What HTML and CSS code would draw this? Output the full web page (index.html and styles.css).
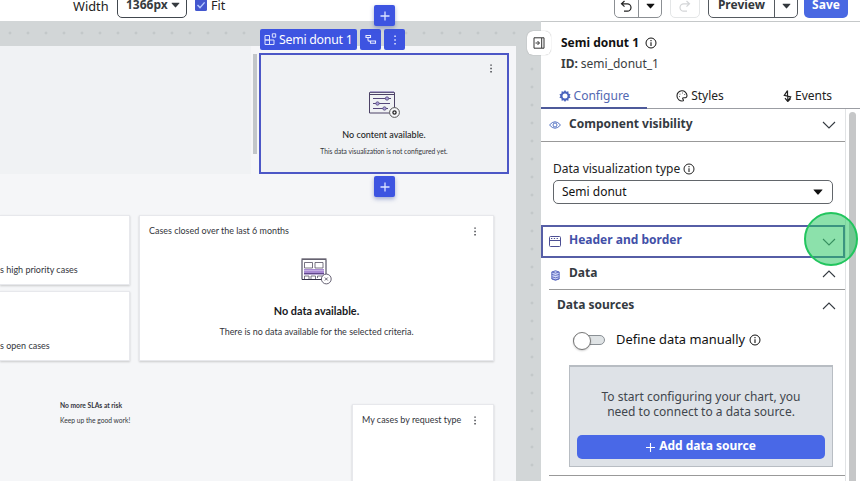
FILE: index.html
```html
<!DOCTYPE html>
<html lang="en">
<head>
<meta charset="utf-8">
<title>Semi donut 1</title>
<link rel="stylesheet" href="styles.css">
</head>
<body>
<svg width="0" height="0" class="defs">
  <symbol id="info" viewBox="0 0 12 12"><circle cx="6" cy="6" r="5" fill="none" stroke="currentColor"/><path d="M6 5.3V9M6 3v1.2" stroke="currentColor" stroke-width="1.1"/></symbol>
  <symbol id="down" viewBox="0 0 14 8"><path d="M1 1l6 6 6-6" fill="none" stroke="currentColor" stroke-width="1.1"/></symbol>
  <symbol id="up" viewBox="0 0 14 8"><path d="M1 7l6-6 6 6" fill="none" stroke="currentColor" stroke-width="1.1"/></symbol>
  <symbol id="caret" viewBox="0 0 10 6"><path d="M.8.5h8.4q.6 0 .2.5L5.4 5.5q-.4.3-.8 0L.6 1Q.2.5.8.5z" fill="currentColor"/></symbol>
  <symbol id="dots" viewBox="0 0 4 10"><path d="M1.3.5h1.5V2H1.3zM1.3 4.2h1.5v1.5H1.3zM1.3 7.9h1.5v1.5H1.3z" fill="currentColor"/></symbol>
</svg>

<header class="topbar">
  <span class="width-label">Width</span>
  <div class="width-box"><b>1366px</b><svg width="9" height="6"><use href="#caret"/></svg></div>
  <svg class="check" width="12" height="12" viewBox="0 0 12 12"><rect width="12" height="12" rx="1.5" fill="#4357cf"/><path d="M2.5 6l2.5 2.6L9.6 3.4" fill="none" stroke="#b4c8ff" stroke-width="1.4"/></svg>
  <span class="fit-label">Fit</span>
  <div class="split undo">
    <span><svg width="12" height="13" viewBox="0 0 12 13"><path d="M4.5 1L1.5 3.8l3 2.8M1.7 3.8h5.6a3.7 3.7 0 0 1 0 7.4H4" fill="none" stroke="#222" stroke-width="1.2"/></svg></span>
    <span><svg width="9" height="6"><use href="#caret"/></svg></span>
  </div>
  <div class="redo"><svg width="12" height="13" viewBox="0 0 12 13"><path d="M7.5 1l3 2.8-3 2.8M10.3 3.8H4.7a3.7 3.7 0 0 0 0 7.4H8" fill="none" stroke="#d3d5d7" stroke-width="1.2"/></svg></div>
  <div class="split preview">
    <b>Preview</b>
    <span><svg width="9" height="6"><use href="#caret"/></svg></span>
  </div>
  <b class="save">Save</b>
</header>

<main class="workspace">
  <section class="canvas">
    <div class="page">
      <div class="hero">
        <div class="hero-side"></div>
        <div class="hero-scroll"></div>
        <article class="selected">
          <div class="selection-bar">
            <span class="chip name"><svg width="13" height="13" viewBox="0 0 13 13"><path d="M1 2.5h4.5V7H1zM1 7h4.5v4.5H1zM5.5 7H10v4.5H5.5zM8.3.8h3.4v3.4H8.3z" fill="none" stroke="#dfe5ff"/></svg><span>Semi donut 1</span></span>
            <span class="chip"><svg width="12" height="11" viewBox="0 0 12 11"><path d="M1 1.5h4.5v2H1zM5.5 7h5v2.3h-5zM3 3.7v2.2q0 1.2 1.2 1.2h1" fill="none" stroke="#e6eaff" stroke-width="1.1"/></svg></span>
            <span class="chip"><svg width="4" height="10"><use href="#dots"/></svg></span>
          </div>
          <span class="add add-top"><svg width="10" height="10"><path d="M5 .5v9M.5 5h9" stroke="#dce3ff" stroke-width="1.3"/></svg></span>
          <span class="add add-bottom"><svg width="10" height="10"><path d="M5 .5v9M.5 5h9" stroke="#dce3ff" stroke-width="1.3"/></svg></span>
          <svg class="kebab" width="4" height="9"><use href="#dots"/></svg>
          <svg class="art" width="31" height="27" viewBox="0 0 31 27">
            <path d="M.5 1.5h25v20.500H.5zM.5 3.500h25" fill="none" stroke="#4c4266"/><path d="M1 .8h24" stroke="#9185bd"/>
            <path d="M4 7.500h18M4 12.500h17M4 17.500h15" stroke="#55477a"/>
            <g fill="#a9a0d8" stroke="#55477a" stroke-width=".8"><circle cx="18" cy="7.500" r="1.700"/><circle cx="8.500" cy="12.500" r="1.700"/><circle cx="15.500" cy="17.500" r="1.700"/></g>
            <circle cx="25.500" cy="21.500" r="4.900" fill="#f7f8fa" stroke="#555"/><circle cx="25.500" cy="21.500" r="1.600" fill="none" stroke="#222" stroke-width="1.300"/>
          </svg>
          <p class="sel-title">No content available.</p>
          <p class="sel-note">This data visualization is not configured yet.</p>
        </article>
      </div>

      <div class="cards">
        <div class="stack">
          <article class="card metric">s high priority cases</article>
          <article class="card metric">s open cases</article>
        </div>
        <article class="card closed">
          <div class="card-head"><span>Cases closed over the last 6 months</span><svg width="4" height="9"><use href="#dots"/></svg></div>
          <svg class="art" width="31" height="27" viewBox="0 0 31 27">
            <path d="M1 1.500h24v20H1z" fill="#fff" stroke="#333046"/><path d="M.5 1h25" stroke="#77737f" stroke-width="1.500"/>
            <path d="M3.500 4.500h8v5.500h-8zM14 4.500h8v5.500h-8zM3.500 21v-3h4.500v3M10 21v-3h4.500v3M16.500 20v-2H22" fill="none" stroke="#555063" stroke-width=".8"/>
            <path d="M3 11h20v5.500H3z" fill="#a98bd3"/><path d="M3 12.500h20" stroke="#c6b0e3"/><path d="M3 15.700h20" stroke="#51397a"/>
            <circle cx="25.300" cy="21" r="4.900" fill="#fff" stroke="#555063" stroke-width=".9"/><path d="M23.800 19.500l3 3m0-3l-3 3" stroke="#4a4558" stroke-width=".8"/>
          </svg>
          <p class="nodata">No data available.</p>
          <p class="nodata-note">There is no data available for the selected criteria.</p>
        </article>
      </div>

      <div class="lower">
        <div class="sla"><p class="sla-title">No more SLAs at risk</p><p class="sla-note">Keep up the good work!</p></div>
        <article class="card requests"><div class="card-head"><span>My cases by request type</span><svg width="4" height="9"><use href="#dots"/></svg></div></article>
      </div>
    </div>
  </section>

  <aside class="panel">
    <span class="collapse"><svg width="12" height="12" viewBox="0 0 12 12"><path d="M1 .8h10v10.400H1zM8.700 1v10" fill="none" stroke="#333"/><path d="M2.500 6h3.700M4.500 4l2 2-2 2" fill="none" stroke="#333"/></svg></span>
    <div class="title-row"><b>Semi donut 1</b><svg width="12" height="12"><use href="#info"/></svg></div>
    <div class="id-row"><b>ID:</b><span>semi_donut_1</span></div>
    <nav class="tabs">
      <span class="tab active"><svg width="12" height="12" viewBox="0 0 12 12"><path d="M6 0l1.200 1.800 2.200-.5.100 2.200L11.600 4.600 10.500 6l1.100 1.500-2.100 1-.1 2.200-2.200-.4L6 12l-1.200-1.700-2.200.4-.1-2.200-2.100-1L1.500 6 .4 4.600l2.100-1.100.1-2.200 2.200.5z" fill="#4a63bd"/><circle cx="6" cy="6" r="2.500" fill="#fff"/></svg><span>Configure</span></span>
      <span class="tab"><svg width="12" height="12" viewBox="0 0 12 12"><path d="M7.200 10.800C4 11.500 1 9.200 1 6a5 5 0 0 1 10-.5c0 2.300-1.500 2.300-3 2.200-1.400-.1-1.700.7-1 1.600.4.700.6 1.300.2 1.500z" fill="none" stroke="#222" stroke-width="1.100"/><path d="M3.500 4.200h1M6 3h1M8.200 4.500h1M3 6.600h1" stroke="#222" stroke-width=".7"/></svg><span>Styles</span></span>
      <span class="tab events"><svg width="9" height="12" viewBox="0 0 9 12"><path d="M4.500.5L1.300 5.300l6.400 1.500L4.800 11.500M4.500.5v5.300M4.800 11.500V6M2 8.200l2.800 3.300 2.800-3" fill="none" stroke="#222" stroke-width="1.200"/></svg><span>Events</span></span>
    </nav>
    <div class="scroller">
      <div class="settings">
        <div class="section visibility"><svg class="lead" width="12" height="10" viewBox="0 0 12 10"><path d="M.5 5Q6-1.500 11.500 5 6 11.500.500 5z" fill="none" stroke="#5775c4"/><circle cx="6" cy="5" r="2" fill="none" stroke="#5775c4"/></svg><b>Component visibility</b><svg class="chev" width="14" height="8"><use href="#down"/></svg></div>
        <div class="field">
          <label><span>Data visualization type</span><svg width="12" height="12"><use href="#info"/></svg></label>
          <div class="select"><span>Semi donut</span><svg width="10" height="6"><use href="#caret"/></svg></div>
        </div>
        <div class="section border-section"><svg class="lead" width="12" height="11" viewBox="0 0 12 11"><path d="M1.500.5h9q1 0 1 1v8q0 1-1 1h-9q-1 0-1-1v-8q0-1 1-1zM.5 4.500h11" fill="none" stroke="#4c4f94"/><path d="M2 2.500h8" stroke="#4c4f94" stroke-dasharray="1.300 1.500"/></svg><b>Header and border</b><svg class="chev" width="14" height="8"><use href="#down"/></svg><i class="pointer"></i></div>
        <div class="section data"><svg class="lead" width="9" height="11" viewBox="0 0 9 11"><path d="M.8 2Q4.500-.5 8.200 2v7Q4.500 11.500.8 9zM.8 2q3.700 2 7.400 0M.8 4.400q3.700 2 7.400 0M.8 6.800q3.700 2 7.400 0M.8 8.700q3.700 2 7.400 0" fill="#c8d0fa" stroke="#5563bb" stroke-width=".9"/></svg><b>Data</b><svg class="chev" width="14" height="8"><use href="#up"/></svg></div>
        <div class="section sources"><b>Data sources</b><svg class="chev" width="14" height="8"><use href="#up"/></svg></div>
        <div class="toggle-row"><span class="toggle"></span><span class="manual">Define data manually</span><svg width="12" height="12"><use href="#info"/></svg></div>
        <div class="connect">
          <p>To start configuring your chart, you<br>need to connect to a data source.</p>
          <div class="add-source"><svg width="9" height="9"><path d="M4.500 0v9M0 4.500h9" stroke="#fff" stroke-width="1.100"/></svg><b>Add data source</b></div>
        </div>
      </div>
      <div class="track"><div class="thumb"></div></div>
    </div>
  </aside>
</main>
</body>
</html>
```
FILE: styles.css
```css
* { box-sizing: border-box; }
body { margin: 0; width: 860px; height: 481px; overflow: hidden; background: #fff; color: #222; font: 12px/16px "Noto Sans", "Open Sans", sans-serif; white-space: nowrap; }
p { margin: 0; }
svg { flex: none; display: block; }
.defs { position: absolute; }

.topbar { display: flex; height: 21px; align-items: flex-start; line-height: 16px; }
.topbar > * { flex: none; }
.width-label { margin: -2px 0 0 73px; width: 36px; font-size: 12.8px; }
.width-box { display: flex; align-items: center; justify-content: space-between; width: 70px; height: 28px; margin: -10px 0 0 8px; padding: 2px 6px 0 8px; border: 1px solid #41474e; border-radius: 5px; color: #363b40; }
.check { margin: -1px 0 0 8px; }
.fit-label { margin: -2px 0 0 4px; width: 13px; font-size: 12.5px; }
.split { display: flex; height: 28px; margin-top: -10px; border: 1px solid #8b8f93; border-radius: 5px; }
.split > * { display: flex; align-items: center; justify-content: center; padding-top: 4px; }
.undo { width: 48px; margin-left: 390px; color: #111; }
.undo > :first-child { width: 23px; padding-right: 2px; }
.undo > :last-child { flex: 1; border-left: 1px solid #8b8f93; }
.redo { display: flex; align-items: center; justify-content: center; width: 30px; height: 28px; margin: -10px 0 0 8px; padding-top: 4px; border: 1px solid #e4e6e7; border-radius: 5px; }
.preview { width: 90px; margin-left: 8px; border-color: #555a60; color: #33383d; }
.preview b { width: 65px; padding-top: 2px; }
.preview span { flex: 1; border-left: 1px solid #555a60; }
.save { width: 44px; height: 28px; margin: -10px 0 0 6px; padding-top: 7px; border-radius: 5px; background: #4968e2; color: #fff; text-align: center; }

.workspace { display: flex; height: 460px; }
.canvas { width: 541px; padding-top: 25px; background: radial-gradient(circle at 10px 12px, #c3c8c9 1px, transparent 1.8px) 0 0 / 18px 18px #d2d6d7; }
.page { width: 516px; height: 435px; background: #f5f6f8; font-family: Lato, sans-serif; color: #33353b; }
.hero { display: flex; height: 128px; }
.hero-side { width: 251px; background: #f0f2f4; }
.hero-scroll { width: 4px; height: 100px; margin: 8px 2px 0; background: #c2c6c9; }
.selected { position: relative; display: flex; flex-direction: column; align-items: center; width: 250px; height: 121px; margin-top: 7px; border: 2px solid #4c57c6; background: #f0f2f4; }
.selection-bar { position: absolute; left: -1px; top: -26px; display: flex; gap: 3px; font-family: "Noto Sans", sans-serif; }
.chip { display: flex; align-items: center; justify-content: center; width: 21px; height: 21px; border-radius: 2px; background: #3d54e1; color: #e6eaff; }
.chip.name { width: 97px; gap: 2px; justify-content: flex-start; padding-left: 4px; font-size: 12.3px; letter-spacing: -.25px; color: #fff; }
.chip.name span { padding-top: 1px; }
.add { position: absolute; left: 113px; display: flex; align-items: center; justify-content: center; width: 21px; height: 21px; border-radius: 2px; background: #3d54e1; box-shadow: 0 2px 4px #4d5fae80; }
.add-top { top: -50px; }
.add-bottom { top: 121px; }
.kebab { align-self: flex-end; margin: 9px 14px 0 0; }
.selected .art { margin: 18px 0 0; }
.sel-title { margin-top: 9px; font-size: 9px; line-height: 16px; color: #1c1e25; font-weight: 500; }
.sel-note { font-size: 6.7px; line-height: 16px; }

.cards { display: flex; gap: 9px; margin-top: 41px; height: 146px; }
.stack { display: flex; flex-direction: column; gap: 6px; width: 130px; }
.card { background: #fff; border: 1px solid #e7e8ec; box-shadow: 0 1px 2px #0000002e; }
.metric { height: 70px; padding-top: 46px; border-left: 0; font-size: 9px; }
.closed { width: 355px; display: flex; flex-direction: column; align-items: center; }
.card-head { display: flex; justify-content: space-between; align-items: center; align-self: stretch; height: 16px; margin: 7px 16px 0 9px; font-size: 8.95px; }
.closed .art { margin-top: 19px; }
.nodata { margin-top: 18px; font-size: 10.85px; line-height: 16px; font-weight: 700; color: #18191d; }
.nodata-note { margin-top: 5px; font-size: 8.95px; line-height: 16px; }
.lower { display: flex; align-items: flex-start; margin-top: 43px; height: 77px; }
.sla { width: 352px; margin-top: -6px; padding-left: 60px; font-size: 6.7px; line-height: 15px; }
.sla-title { font-weight: 700; }
.requests { width: 142px; height: 90px; }

.panel { position: relative; width: 319px; height: 460px; border-top: 1px solid #c5c8c9; background: #fff; }
.collapse { position: absolute; left: -14px; top: 9px; display: flex; align-items: center; justify-content: center; width: 24px; height: 24px; border-radius: 6px; background: #fff; box-shadow: 0 0 1px #0006; }
.title-row { display: flex; align-items: center; gap: 6px; height: 16px; margin: 13px 0 0 20px; color: #111; }
.id-row { display: flex; gap: 3px; height: 16px; margin: 5px 0 0 20px; color: #3a3d41; }
.tabs { display: grid; grid-template-columns: 106px 106px 107px; height: 32px; margin-top: 5px; border-bottom: 1px solid #9b9da3; }
.tab { display: flex; align-items: center; justify-content: center; gap: 3px; height: 32px; padding-top: 5px; color: #222; }
.tab.active { color: #5268b2; border-bottom: 2px solid #4e5a9a; padding-top: 7px; }
.tab.events { padding-left: 2px; }
.scroller { display: flex; height: 372px; }
.settings { width: 304px; }
.section { position: relative; display: flex; align-items: center; width: 304px; color: #343a41; }
.section b { padding-bottom: 2px; }
.section .chev { margin-left: auto; margin-right: 9px; }
.visibility { height: 33px; padding-left: 8px; border-bottom: 1px solid #999; }
.visibility b { margin-left: 8px; }
.field { padding: 19px 0 0 12px; height: 83px; }
.field label { display: flex; align-items: center; gap: 3px; height: 16px; }
.select { display: flex; align-items: center; justify-content: space-between; width: 280px; height: 24px; margin-top: 3px; padding: 0 9px 0 8px; border: 1px solid #62666b; border-radius: 5px; color: #111; }
.border-section { height: 33px; padding-left: 6px; border: 2px solid #565ea6; color: #4250a8; }
.border-section b { margin-left: 8px; padding-bottom: 3px; }
.border-section .chev { margin-right: 7px; color: #4d5560; }
.pointer { position: absolute; left: 261px; top: -15px; z-index: 2; width: 54px; height: 54px; border: 2px solid #22c55e; border-radius: 50%; background: #22c55e85; }
.data { width: 296px; margin-left: 8px; height: 32px; padding-left: 2px; border-bottom: 1px solid #999; }
.data .lead { margin-top: 3px; }
.data b { margin-left: 9px; }
.sources { height: 32px; padding-left: 16px; }
.toggle-row { display: flex; align-items: center; height: 16px; margin: 9px 0 0 32px; color: #111; }
.toggle { position: relative; width: 32px; height: 10px; border: 1px solid #8a9095; border-radius: 5px; background: #dfe3e5; margin-right: 11px; margin-top: 1px; }
.toggle::before { content: ""; position: absolute; left: -1px; top: -4px; width: 16px; height: 16px; border: 1px solid #777; border-radius: 50%; background: #fff; box-shadow: 0 1px 2px #0003; }
.manual { font-size: 12.9px; }
.toggle-row svg { margin-left: 4px; margin-top: 1px; }
.connect { width: 264px; height: 102px; margin: 18px 0 0 28px; padding: 22px 7px 0; border: 1px solid #b8bdc3; border-top-width: 2px; background: #dee2e7; text-align: center; color: #41464d; line-height: 15px; }
.add-source { display: flex; align-items: center; justify-content: center; gap: 4px; height: 24px; margin-top: 16px; border-radius: 5px; background: #4968e7; color: #fff; }
.add-source b { padding-bottom: 3px; }
.settings::after { content: ""; display: block; height: 1px; margin: 8px 0 0 8px; background: #999; }
.track { width: 15px; border-left: 1px solid #e1e3e5; padding: 3px 4px 0 3px; }
.thumb { height: 380px; border-radius: 4px; background: #c6c7c8; }
```
